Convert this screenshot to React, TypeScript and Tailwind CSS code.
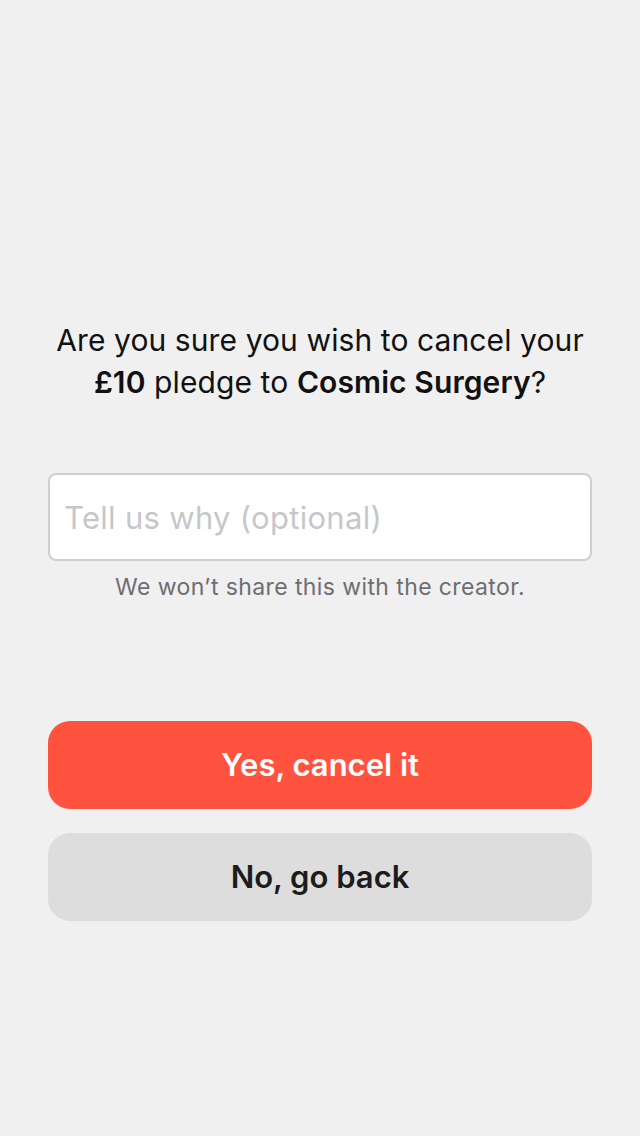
import React from "react";

const App: React.FC = () => {
  return (
    <div
      className="flex min-h-[1136px] w-full flex-col bg-[#f0f0f0] px-12 pt-[319px] text-[#111]"
      style={{ fontFamily: "Inter, 'Noto Sans', sans-serif" }}
    >
      <h1 className="text-center text-[30px] leading-[42px] font-normal tracking-[0.1px]">
        Are you sure you wish to cancel your
        <br />
        <span className="font-semibold">£10</span> pledge to{" "}
        <span className="font-semibold">Cosmic Surgery</span>?
      </h1>

      <input
        type="text"
        placeholder="Tell us why (optional)"
        className="mt-[70px] h-[88px] w-full rounded-lg border-2 border-[#cfcfcf] bg-white px-[14px] text-[31px] tracking-[0.3px] text-[#111] outline-none placeholder:text-[#c7c7c9]"
      />
      <p className="mt-[10px] text-center text-[23px] leading-[32px] tracking-[0.4px] text-[#6d6d72]">
        We won’t share this with the creator.
      </p>

      <div className="mt-[118px] flex flex-col gap-6">
        <button className="h-[88px] w-full rounded-[22px] bg-[#ff5340] text-[31px] font-semibold text-white">
          Yes, cancel it
        </button>
        <button className="h-[88px] w-full rounded-[22px] bg-[#dcdddc] text-[31px] font-semibold text-[#1c1c1c]">
          No, go back
        </button>
      </div>
    </div>
  );
};

export default App;
